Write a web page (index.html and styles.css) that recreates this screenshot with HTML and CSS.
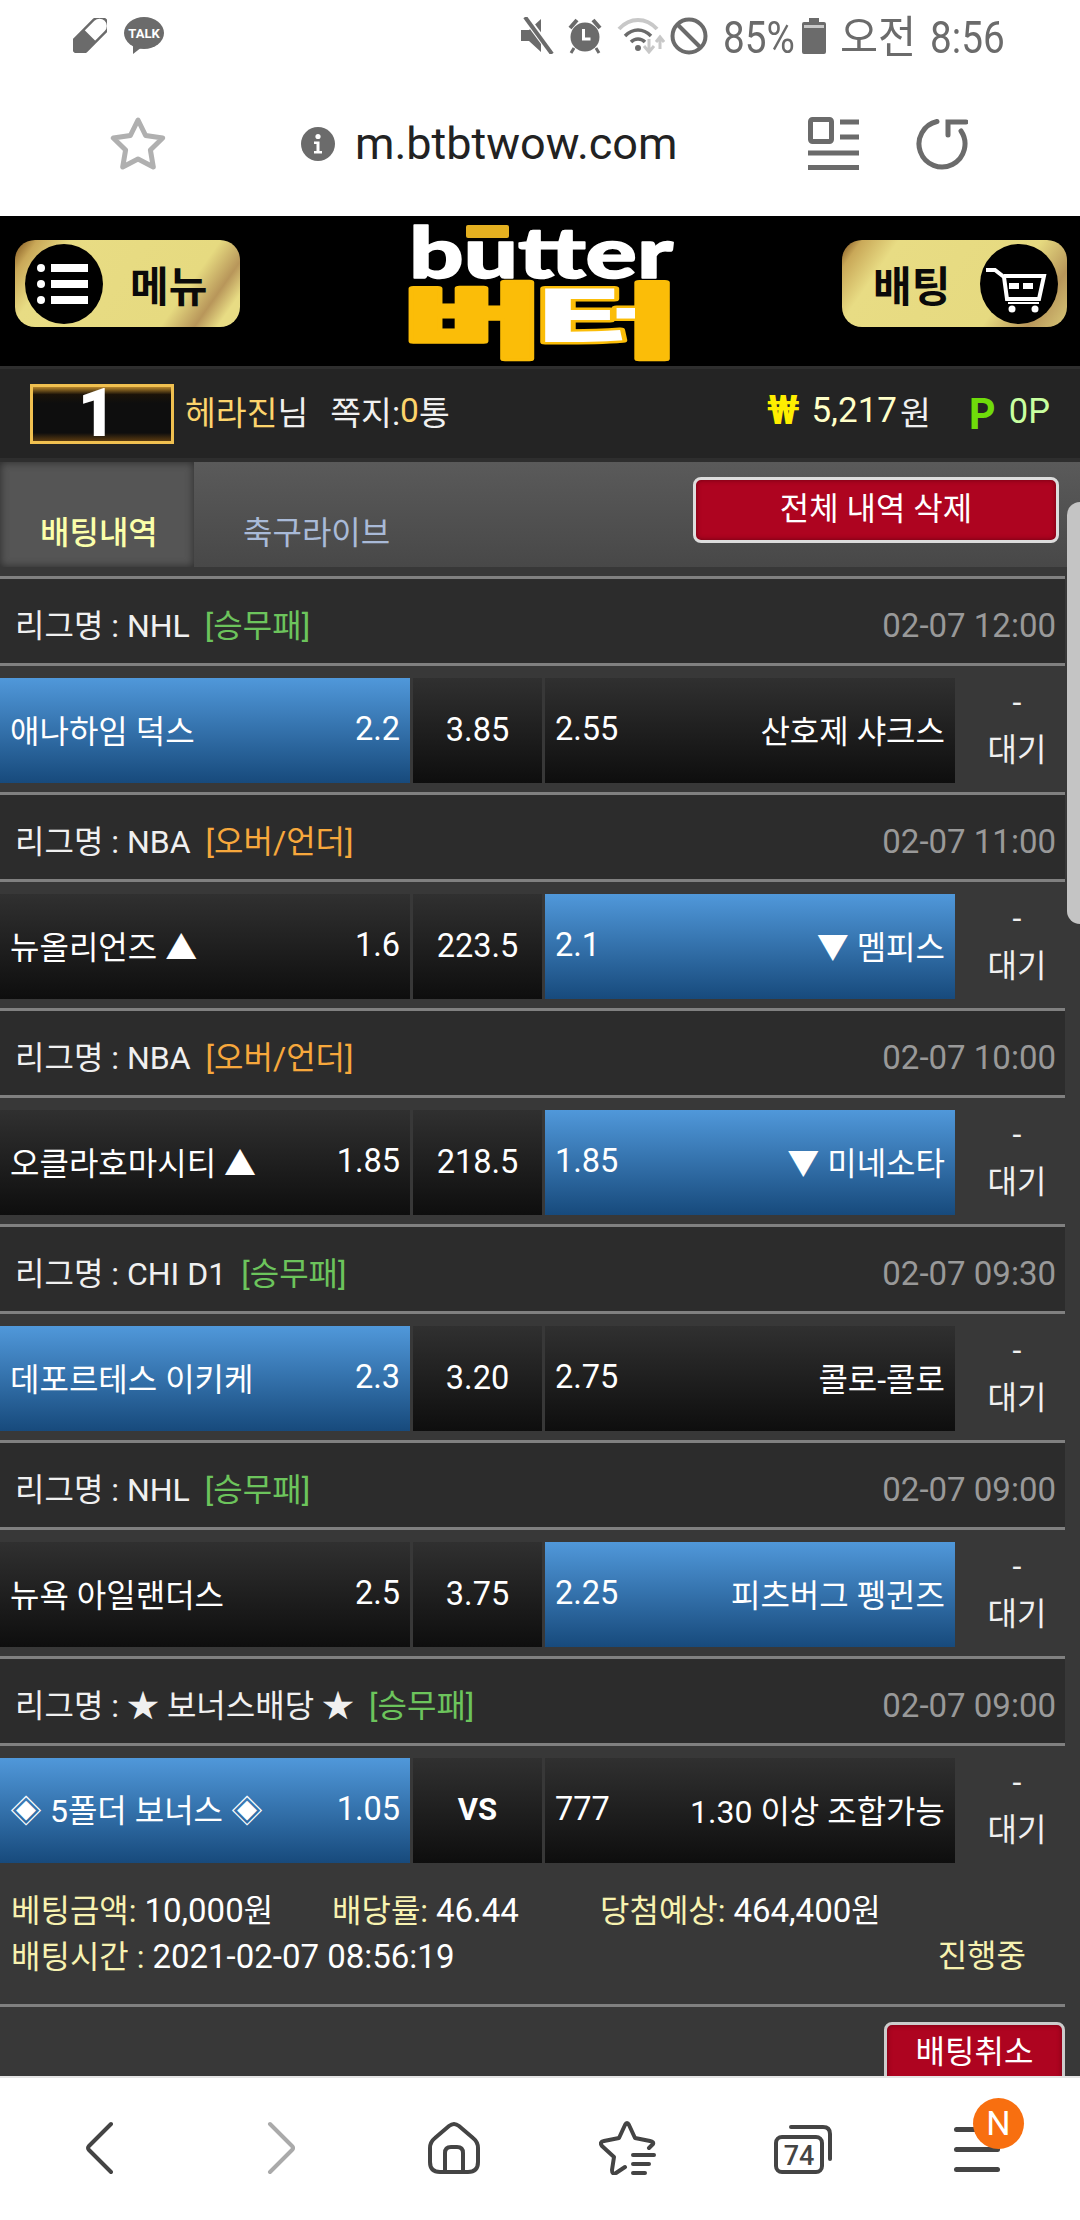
FILE: index.html
```html
<!DOCTYPE html>
<html lang="ko">
<head>
<meta charset="utf-8">
<title>butter</title>
<link rel="stylesheet" href="styles.css">
</head>
<body>
<div class="phone">
  <div class="status">
    <svg class="i-pill" viewBox="0 0 34 35"><g transform="rotate(-45 17 17.5)"><rect x="-5" y="9" width="44" height="17" rx="8.500" fill="none" stroke="#6b6b6b" stroke-width="2.400"/><path d="M17 9H3.500a8.500 8.500 0 0 0 0 17H17z" fill="#6b6b6b"/></g></svg>
    <svg class="i-talk" viewBox="0 0 40 37"><ellipse cx="20" cy="16" rx="20" ry="16" fill="#6b6b6b"/><path d="M9 28l0 9 9-7z" fill="#6b6b6b"/><text x="20" y="20.500" text-anchor="middle" class="talk-t">TALK</text></svg>
    <div class="status-right">
      <svg class="i-mute" viewBox="0 0 35 37"><path d="M1 13h8L21 2v33L9 24H1z" fill="#6b6b6b"/><path d="M6 1l26 35" stroke="#fff" stroke-width="7"/><path d="M5 0l27 37" stroke="#6b6b6b" stroke-width="4"/></svg>
      <svg class="i-alarm" viewBox="0 0 34 37"><circle cx="17" cy="20" r="14.500" fill="#6b6b6b"/><path d="M2 11L9 3M32 11L25 3" stroke="#6b6b6b" stroke-width="4"/><path d="M6 31l-3 5M28 31l3 5" stroke="#6b6b6b" stroke-width="3"/><path d="M15.500 12v10h7" fill="none" stroke="#fff" stroke-width="3"/></svg>
      <svg class="i-wifi" viewBox="0 0 48 37"><path d="M2 12C13 0 29 0 40 12" fill="none" stroke="#c8c8c8" stroke-width="4"/><path d="M8 19c8-8 18-8 26 0M14 25c4-4 10-4 14 0" fill="none" stroke="#6b6b6b" stroke-width="3.500"/><circle cx="21" cy="31" r="3" fill="#6b6b6b"/><path d="M32 22v12M27 29l5 6 5-6" fill="none" stroke="#c8c8c8" stroke-width="3"/><path d="M43 32V21M39 25l4-5 4 5" fill="none" stroke="#c8c8c8" stroke-width="3"/></svg>
      <svg class="i-block" viewBox="0 0 38 38"><circle cx="19" cy="19" r="16.500" fill="none" stroke="#6b6b6b" stroke-width="4"/><path d="M7.500 7.500l23 23" stroke="#6b6b6b" stroke-width="4"/></svg>
      <span class="stat-text st-pct">85%</span>
      <svg class="i-batt" viewBox="0 0 24 36"><path d="M7 0h10v4h5a2 2 0 0 1 2 2v28a2 2 0 0 1-2 2H2a2 2 0 0 1-2-2V6a2 2 0 0 1 2-2h5z" fill="#6b6b6b"/><rect x="2" y="7" width="20" height="3" fill="#c8c8c8"/></svg>
      <span class="stat-text st-ampm">오전</span>
      <span class="stat-text st-clock">8:56</span>
    </div>
  </div>

  <div class="urlbar">
    <svg class="i-star" viewBox="0 0 56 56"><path d="M28 4L35.600 19.500 52.700 22 40.400 34 43.300 51 28 43 12.700 51 15.600 34 3.300 22 20.400 19.500Z" fill="none" stroke="#b0b0b0" stroke-width="5" stroke-linejoin="round"/></svg>
    <svg class="i-info" viewBox="0 0 34 34"><circle cx="17" cy="17" r="17" fill="#6b6b6b"/><circle cx="17" cy="9.500" r="2.600" fill="#fff"/><path d="M13 14.500h5.500V24h2.500v2.500h-8V24h2.500v-7H13z" fill="#fff"/></svg>
    <span class="url">m.btbtwow.com</span>
    <svg class="i-reader" viewBox="0 0 51 53"><rect x="2.500" y="2.500" width="21" height="22" rx="2" fill="none" stroke="#6b6b6b" stroke-width="5"/><path d="M32 5h19M32 20h19" stroke="#6b6b6b" stroke-width="5"/><path d="M0 36h51M0 50.500h51" stroke="#6b6b6b" stroke-width="5"/></svg>
    <svg class="i-reload" viewBox="0 0 52 52"><path d="M21 3.500A23 23 0 1 0 45 13" fill="none" stroke="#6b6b6b" stroke-width="5" stroke-linecap="round"/><path d="M32 17V4H50" fill="none" stroke="#6b6b6b" stroke-width="5" stroke-linecap="round"/></svg>
  </div>

  <div class="head">
    <div class="gold gold-l">
      <svg class="gold-ic" viewBox="0 0 78 80"><ellipse cx="39" cy="40" rx="39" ry="40" fill="#000"/><g fill="#fff"><circle cx="16" cy="24" r="4"/><circle cx="16" cy="40" r="4"/><circle cx="16" cy="56" r="4"/><rect x="26" y="20" width="37" height="8"/><rect x="26" y="36" width="37" height="8"/><rect x="26" y="52" width="37" height="8"/></g></svg>
      <span class="gold-t gold-t-l">메뉴</span>
    </div>
    <svg class="logo" viewBox="0 0 261 133">
      <defs><linearGradient id="teo"><stop offset="0.7" stop-color="#fff"/><stop offset="0.7" stop-color="#fbbd08"/></linearGradient></defs>
      <rect x="55" y="0" width="43" height="13" rx="2" fill="#e4b020"/>
      <text class="logo-en" x="-2" y="53" textLength="264" lengthAdjust="spacingAndGlyphs">butter</text>
      <text class="logo-ko ko-a" x="-8" y="125" textLength="140" lengthAdjust="spacingAndGlyphs">버</text>
      <text class="logo-ko ko-b" x="122" y="125" textLength="146" lengthAdjust="spacingAndGlyphs">터</text>
    </svg>
    <div class="gold gold-r">
      <span class="gold-t gold-t-r">배팅</span>
      <svg class="gold-ic cart" viewBox="0 0 78 80"><ellipse cx="39" cy="40" rx="39" ry="40" fill="#000"/><path d="M6 26h9l9 7 3 22h32l5-23H24" fill="none" stroke="#fff" stroke-width="4"/><rect x="29" y="39" width="10" height="6" fill="#fff"/><rect x="43" y="39" width="10" height="6" fill="#fff"/><path d="M28 59h31" stroke="#fff" stroke-width="2"/><circle cx="32" cy="65" r="3.500" fill="#fff"/><circle cx="55" cy="65" r="3.500" fill="#fff"/></svg>
    </div>
  </div>

  <div class="userbar">
    <div class="rank"><span class="rank-n">1</span></div>
    <span class="u-name">헤라진</span><span class="u-txt">님</span>
    <span class="u-txt u-msg">쪽지:</span><span class="u-name">0</span><span class="u-txt">통</span>
    <span class="won">₩</span><span class="money">5,217</span><span class="u-txt u-wn">원</span>
    <span class="pt">P</span><span class="pt-v">0P</span>
  </div>

  <main class="main">
    <div class="tabs">
      <div class="tab tab-on">배팅내역</div>
      <div class="tab tab-off">축구라이브</div>
      <div class="btn btn-all">전체 내역 삭제</div>
    </div>

    <section class="bet">
      <div class="league"><span class="lg">리그명 : <i class="lat">NHL</i></span><span class="k-g">[승무패]</span><span class="time">02-07 12:00</span></div>
      <div class="match">
        <div class="cell on"><span>애나하임 덕스</span><b class="num">2.2</b></div>
        <div class="cell mid"><b class="num">3.85</b></div>
        <div class="cell"><b class="num">2.55</b><span>산호제 샤크스</span></div>
        <div class="state"><span>-</span><span>대기</span></div>
      </div>
    </section>
    <section class="bet">
      <div class="league"><span class="lg">리그명 : <i class="lat">NBA</i></span><span class="k-o">[오버/언더]</span><span class="time">02-07 11:00</span></div>
      <div class="match">
        <div class="cell"><span>뉴올리언즈 ▲</span><b class="num">1.6</b></div>
        <div class="cell mid"><b class="num">223.5</b></div>
        <div class="cell on"><b class="num">2.1</b><span>▼ 멤피스</span></div>
        <div class="state"><span>-</span><span>대기</span></div>
      </div>
    </section>
    <section class="bet">
      <div class="league"><span class="lg">리그명 : <i class="lat">NBA</i></span><span class="k-o">[오버/언더]</span><span class="time">02-07 10:00</span></div>
      <div class="match">
        <div class="cell"><span>오클라호마시티 ▲</span><b class="num">1.85</b></div>
        <div class="cell mid"><b class="num">218.5</b></div>
        <div class="cell on"><b class="num">1.85</b><span>▼ 미네소타</span></div>
        <div class="state"><span>-</span><span>대기</span></div>
      </div>
    </section>
    <section class="bet">
      <div class="league"><span class="lg">리그명 : <i class="lat">CHI D1</i></span><span class="k-g">[승무패]</span><span class="time">02-07 09:30</span></div>
      <div class="match">
        <div class="cell on"><span>데포르테스 이키케</span><b class="num">2.3</b></div>
        <div class="cell mid"><b class="num">3.20</b></div>
        <div class="cell"><b class="num">2.75</b><span>콜로-콜로</span></div>
        <div class="state"><span>-</span><span>대기</span></div>
      </div>
    </section>
    <section class="bet">
      <div class="league"><span class="lg">리그명 : <i class="lat">NHL</i></span><span class="k-g">[승무패]</span><span class="time">02-07 09:00</span></div>
      <div class="match">
        <div class="cell"><span>뉴욕 아일랜더스</span><b class="num">2.5</b></div>
        <div class="cell mid"><b class="num">3.75</b></div>
        <div class="cell on"><b class="num">2.25</b><span>피츠버그 펭귄즈</span></div>
        <div class="state"><span>-</span><span>대기</span></div>
      </div>
    </section>
    <section class="bet">
      <div class="league"><span class="lg">리그명 : ★ 보너스배당 ★</span><span class="k-g">[승무패]</span><span class="time">02-07 09:00</span></div>
      <div class="match">
        <div class="cell on"><span>◈ 5폴더 보너스 ◈</span><b class="num">1.05</b></div>
        <div class="cell mid"><b class="num vs">VS</b></div>
        <div class="cell"><b class="num">777</b><span>1.30 이상 조합가능</span></div>
        <div class="state"><span>-</span><span>대기</span></div>
      </div>
    </section>

    <div class="summary">
      <div class="sum-1">
        <span><em>베팅금액:</em> <i class="lat">10,000</i>원</span>
        <span><em>배당률:</em> <i class="lat">46.44</i></span>
        <span><em>당첨예상:</em> <i class="lat">464,400</i>원</span>
      </div>
      <div class="sum-2">
        <span><em>배팅시간 :</em> <i class="lat">2021-02-07 08:56:19</i></span>
        <em>진행중</em>
      </div>
    </div>
    <div class="foot"><div class="btn btn-cancel">배팅취소</div></div>
    <div class="scroll"></div>
  </main>

  <nav class="nav">
    <svg class="n-back" viewBox="0 0 27 54"><path d="M25 3L3 25Q1 27 3 29L25 51" fill="none" stroke="#444" stroke-width="4" stroke-linecap="round"/></svg>
    <svg class="n-fwd" viewBox="0 0 28 54"><path d="M3 3L25 25Q27 27 25 29L3 51" fill="none" stroke="#aaa" stroke-width="4" stroke-linecap="round"/></svg>
    <svg class="n-home" viewBox="0 0 52 54"><path d="M21 5Q26 1 31 5L45 17Q50 21 50 27V41Q50 51 40 51H12Q2 51 2 41V27Q2 21 7 17Z" fill="none" stroke="#444" stroke-width="4"/><path d="M17 50V32Q17 26 23 26H29Q35 26 35 32V50" fill="none" stroke="#444" stroke-width="4"/></svg>
    <svg class="n-fav" viewBox="0 0 57 54"><path d="M50 27L54 23Q55 21 51 20L36 17 30 4Q28 0 26 4L20 17 5 20Q0 21 3 25L15 36 13 49Q13 54 17 52L26 46" fill="none" stroke="#444" stroke-width="4" stroke-linecap="round" stroke-linejoin="round"/><path d="M34 34H55M34 43H50M34 52H46" stroke="#444" stroke-width="4" stroke-linecap="round"/></svg>
    <svg class="n-tabs" viewBox="0 0 58 50"><rect x="2" y="13" width="46" height="35" rx="6" fill="none" stroke="#444" stroke-width="4"/><path d="M17 3H49Q56 3 56 10V35" fill="none" stroke="#444" stroke-width="4" stroke-linecap="round"/><text x="25" y="41" text-anchor="middle" class="tabs-t">74</text></svg>
    <div class="n-menu">
      <span class="m-line"></span><span class="m-line"></span><span class="m-line"></span>
      <span class="badge">N</span>
    </div>
  </nav>
</div>
</body>
</html>
```

FILE: styles.css
```css
* { box-sizing: border-box; }
html, body { margin: 0; padding: 0; }
body { font-family: Roboto, "Noto Sans CJK KR", sans-serif; background: #fff; }
i, em, b { font-style: normal; font-weight: 400; }
svg { display: block; flex: none; }

.phone { width: 1080px; height: 2220px; display: flex; flex-direction: column; overflow: hidden; position: relative; }

/* status bar */
.status { height: 60px; flex: none; display: flex; align-items: flex-start; padding: 16px 0 0 73px; color: #6b6b6b; }
.i-pill { width: 34px; height: 35px; margin-top: 2px; }
.i-talk { width: 40px; height: 37px; margin-left: 17px; margin-top: 1px; }
.talk-t { font: 700 13px Roboto, sans-serif; fill: #fff; }
.status-right { margin-left: auto; display: flex; align-items: flex-start; }
.i-mute { width: 35px; height: 37px; margin-top: 1px; }
.i-alarm { width: 34px; height: 37px; margin: 1px 0 0 13px; }
.i-wifi { width: 48px; height: 37px; margin: 1px 0 0 15px; }
.i-block { width: 38px; height: 38px; margin: 1px 0 0 5px; }
.stat-text { display: block; font-size: 44px; line-height: 44px; white-space: nowrap; transform-origin: left center; }
.st-pct { width: 70px; margin-left: 15px; transform: scaleX(.88); }
.st-ampm { width: 75px; margin-left: 14px; transform: scaleX(.94); }
.st-clock { width: 73px; margin-left: 15px; margin-right: 77px; transform: scaleX(.88); }
.i-batt { width: 24px; height: 36px; margin-left: 9px; margin-top: 2px; }

/* url bar */
.urlbar { height: 156px; flex: none; display: flex; align-items: flex-start; padding: 56px 0 0 110px; }
.i-star { width: 56px; height: 56px; }
.i-info { width: 34px; height: 34px; margin: 11px 0 0 135px; }
.url { width: 473px; padding-left: 20px; font-size: 45px; line-height: 52px; color: #222; margin-top: 2px; }
.i-reader { width: 51px; height: 53px; margin-top: 1px; }
.i-reload { width: 52px; height: 52px; margin: 2px 0 0 57px; }

/* header */
.head { height: 150px; flex: none; background: #000; display: flex; justify-content: space-between; align-items: flex-start; padding: 9px 13px 0 15px; }
.gold { width: 225px; height: 87px; margin-top: 15px; border-radius: 20px; display: flex; align-items: center; padding: 0 10px; }
.gold-l { background: linear-gradient(125deg, #7a4d1a 0, #c9a858 8%, #e8dc84 20%, #e6da80 72%, #b8965a 84%, #e8dc84 92%); }
.gold-r { background: linear-gradient(125deg, #7a4d1a 0, #c9a858 7%, #e8dc84 20%, #e6da80 70%, #b8965a 86%, #d8c878 100%); }
.gold-ic { width: 78px; height: 80px; }
.gold-t { font-family: "Noto Sans CJK KR", sans-serif; font-weight: 700; font-size: 42px; line-height: 46px; color: #0a0a0a; white-space: nowrap; }
.gold-t-l { margin-left: 27px; }
.gold-t-r { margin-left: 21px; }
.cart { margin-left: 30px; }
.logo { width: 261px; height: 133px; overflow: visible; }
.logo-en { font: 900 71px Lato, "Open Sans", sans-serif; fill: #fff; stroke: #fff; stroke-width: 1.500px; stroke-linejoin: round; }
.logo-ko { font: 900 80px "Noto Sans CJK KR", sans-serif; stroke: #fbbd08; stroke-width: 5px; stroke-linejoin: round; paint-order: stroke; }
.ko-a { fill: #fbbd08; }
.ko-b { fill: url(#teo); }

/* user bar */
.userbar { height: 96px; flex: none; background: #242424; border-top: 3px solid #2e2e2e; border-bottom: 4px solid #2e2e2e; display: flex; align-items: center; padding: 0 30px 6px 30px; font-size: 33.500px; color: #f0f0f0; }
.rank { width: 144px; height: 60px; margin-top: 6px; border: 3px solid #f0c050; background: linear-gradient(#b8862a 0, #1a1208 14%, #0e0e0e 30%, #0e0e0e 85%, #5a3a10 100%); display: flex; justify-content: center; margin-right: 11px; padding-right: 10px; }
.rank-n { font-size: 66px; font-weight: 900; line-height: 54px; height: 54px; color: #fff; filter: blur(.6px); }
.u-name { color: #fcd46c; }
.u-msg { margin-left: 22px; }
.won { margin-left: auto; color: #ffee00; font-weight: 700; font-size: 40px; }
.money { margin-left: 12px; color: #ffffc8; font-size: 35px; }
.u-wn { margin-left: 3px; }
.pt { margin-left: 37px; color: #6fdc0a; font-weight: 700; font-size: 42px; font-family: "Noto Sans CJK KR", sans-serif; }
.pt-v { margin-left: 13px; color: #c8ffa0; font-size: 34.500px; }

/* main */
.main { flex: 1; min-height: 0; overflow: hidden; background: #383838; position: relative; }
.tabs { height: 105px; background: linear-gradient(#5a5a5a, #484848); display: flex; align-items: flex-start; }
.tab { height: 105px; font-size: 32px; line-height: 36px; padding-top: 53px; }
.tab-on { width: 194px; padding-left: 40px; font-weight: 500; color: #fbffaa; background: #555; box-shadow: inset 0 0 8px #2a2a2a; }
.tab-off { padding-left: 49px; color: #a9bad8; }
.btn { border-radius: 8px; background: #ae0420; color: #fff; box-shadow: inset 0 0 5px #6d0012; text-align: center; font-size: 32px; }
.btn-all { margin: 15px 21px 0 auto; width: 366px; height: 66px; border: 3px solid #ddd; line-height: 58px; }

.bet { width: 1065px; margin-top: 9px; border-top: 3px solid #808080; }
.bet + .bet { margin-top: 0; }
.league { height: 84px; background: #2c2c2c; border-bottom: 3px solid #808080; box-sizing: content-box; display: flex; align-items: center; padding: 0 9px 0 15px; font-size: 32px; color: #f0f0f0; line-height: 40px; }
.league > span { position: relative; top: 5px; }
.lat { font-size: 32px; }
.k-g { color: #6cc45c; margin-left: 15px; }
.k-o { color: #f7a83c; margin-left: 15px; }
.time { margin-left: auto; color: #999; font-size: 33px; }
.match { height: 126px; padding-top: 12px; display: grid; grid-template-columns: 410px 129px 410px 1fr; column-gap: 3px; }
.cell { height: 105px; background: linear-gradient(#303030, #0e0e0e); display: flex; align-items: center; justify-content: space-between; padding: 0 10px 3px; font-size: 32px; color: #fff; white-space: nowrap; }
.cell.on { background: linear-gradient(#5098da, #174a7c); }
.mid { justify-content: center; padding: 0 0 2px; }
.num { font-size: 32.500px; }
.vs { font-weight: 700; font-size: 31px; }
.state { height: 105px; display: flex; flex-direction: column; align-items: center; padding: 0 0 0 11px; font-size: 32px; line-height: 48px; color: #f0f0f0; }

.summary { height: 132px; padding: 16px 0 0 11px; font-size: 32px; line-height: 45px; color: #fff; }
.summary em { color: #f7f2b0; }
.summary .lat { font-size: 33px; }
.sum-1 { display: grid; grid-template-columns: 321px 268px 1fr; }
.sum-2 { display: flex; justify-content: space-between; padding-right: 54px; }
.foot { width: 1065px; border-top: 3px solid #808080; padding-top: 15px; display: flex; justify-content: flex-end; }
.btn-cancel { width: 181px; height: 66px; border: 3px solid #ccc; line-height: 54px; }
.scroll { position: absolute; right: 0; top: 40px; width: 13px; height: 422px; background: #c4c4c4; border-radius: 14px 0 0 14px; }

/* bottom nav */
.nav { height: 144px; flex: none; background: #fff; border-top: 2px solid #e5e5e5; display: flex; align-items: flex-start; padding: 43px 0 0 86px; }
.n-back { width: 27px; height: 54px; }
.n-fwd { width: 28px; height: 54px; margin-left: 154px; }
.n-home { width: 52px; height: 54px; margin-left: 133px; }
.n-fav { width: 57px; height: 54px; margin-left: 119px; }
.n-tabs { width: 58px; height: 50px; margin: 3px 0 0 118px; }
.tabs-t { font: 500 27px Roboto, sans-serif; fill: #444; }
.n-menu { position: relative; width: 46px; margin-left: 122px; padding-top: 6px; display: flex; flex-direction: column; gap: 15px; }
.m-line { height: 5px; border-radius: 3px; background: #444; }
.badge { position: absolute; left: 19px; top: -23px; width: 51px; height: 51px; border-radius: 50%; background: #f86f10; color: #fff; font-size: 34px; line-height: 51px; text-align: center; }
```
